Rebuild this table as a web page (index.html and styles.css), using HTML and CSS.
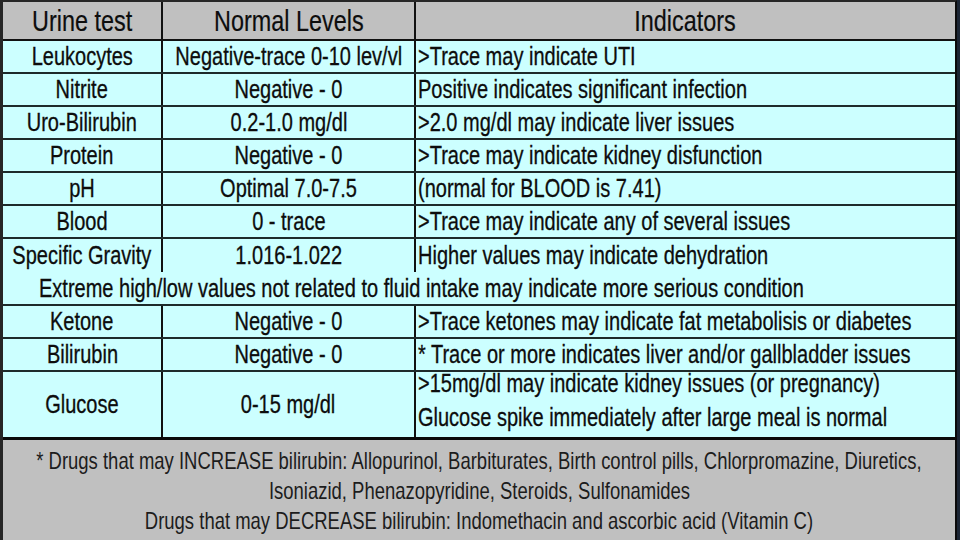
FILE: index.html
```html
<!DOCTYPE html>
<html>
<head>
<meta charset="utf-8">
<link rel="stylesheet" href="styles.css">
</head>
<body>
<div class="sheet">
  <div class="row head">
    <div class="c"><span class="t">Urine test</span></div>
    <div class="c"><span class="t">Normal Levels</span></div>
    <div class="c last"><span class="t">Indicators</span></div>
  </div>
  <div class="row">
    <div class="c"><span class="t">Leukocytes</span></div>
    <div class="c"><span class="t">Negative-trace 0-10 lev/vl</span></div>
    <div class="c ind"><span class="t">&gt;Trace may indicate UTI</span></div>
  </div>
  <div class="row">
    <div class="c"><span class="t">Nitrite</span></div>
    <div class="c"><span class="t">Negative - 0</span></div>
    <div class="c ind"><span class="t">Positive indicates significant infection</span></div>
  </div>
  <div class="row">
    <div class="c"><span class="t">Uro-Bilirubin</span></div>
    <div class="c"><span class="t">0.2-1.0 mg/dl</span></div>
    <div class="c ind"><span class="t">&gt;2.0 mg/dl may indicate liver issues</span></div>
  </div>
  <div class="row">
    <div class="c"><span class="t">Protein</span></div>
    <div class="c"><span class="t">Negative - 0</span></div>
    <div class="c ind"><span class="t">&gt;Trace may indicate kidney disfunction</span></div>
  </div>
  <div class="row">
    <div class="c"><span class="t">pH</span></div>
    <div class="c"><span class="t">Optimal 7.0-7.5</span></div>
    <div class="c ind"><span class="t">(normal for BLOOD is 7.41)</span></div>
  </div>
  <div class="row">
    <div class="c"><span class="t">Blood</span></div>
    <div class="c"><span class="t">0 - trace</span></div>
    <div class="c ind"><span class="t">&gt;Trace may indicate any of several issues</span></div>
  </div>
  <div class="row open">
    <div class="c"><span class="t">Specific Gravity</span></div>
    <div class="c"><span class="t">1.016-1.022</span></div>
    <div class="c ind"><span class="t">Higher values may indicate dehydration</span></div>
  </div>
  <div class="row span">
    <div class="wide"><span class="t">Extreme high/low values not related to fluid intake may indicate more serious condition</span></div>
  </div>
  <div class="row">
    <div class="c"><span class="t">Ketone</span></div>
    <div class="c"><span class="t">Negative - 0</span></div>
    <div class="c ind"><span class="t">&gt;Trace ketones may indicate fat metabolisis or diabetes</span></div>
  </div>
  <div class="row">
    <div class="c"><span class="t">Bilirubin</span></div>
    <div class="c"><span class="t">Negative - 0</span></div>
    <div class="c ind"><span class="t">* Trace or more indicates liver and/or gallbladder issues</span></div>
  </div>
  <div class="row tall">
    <div class="c"><span class="t">Glucose</span></div>
    <div class="c"><span class="t">0-15 mg/dl</span></div>
    <div class="c ind two">
      <span class="t">&gt;15mg/dl may indicate kidney issues (or pregnancy)</span>
      <span class="t">Glucose spike immediately after large meal is normal</span>
    </div>
  </div>
  <div class="foot">
    <p><span class="t">* Drugs that may INCREASE bilirubin: Allopurinol, Barbiturates, Birth control pills, Chlorpromazine, Diuretics,</span></p>
    <p><span class="t">Isoniazid, Phenazopyridine, Steroids, Sulfonamides</span></p>
    <p><span class="t">Drugs that may DECREASE bilirubin: Indomethacin and ascorbic acid (Vitamin C)</span></p>
  </div>
</div>
</body>
</html>
```
FILE: styles.css
```css
html, body {
  margin: 0;
  padding: 0;
}
body {
  width: 960px;
  height: 540px;
  background: #1b2534;
  overflow: hidden;
  font-family: "Liberation Sans", Arial, sans-serif;
  color: #0d0d0d;
}
.sheet {
  box-sizing: border-box;
  width: 957px;
  height: 540px;
  background: #ccffff;
  border-left: 3px solid #262626;
  border-top: 2px solid #262626;
  border-right: 2px solid #0a0a0a;
  display: flex;
  flex-direction: column;
}
.t {
  display: inline-block;
  white-space: nowrap;
  transform: scaleX(0.80);
  transform-origin: center center;
  -webkit-text-stroke: 0.3px #0d0d0d;
}
.row {
  box-sizing: border-box;
  display: grid;
  grid-template-columns: 160px 253px 1fr;
  height: 33px;
  border-bottom: 2px solid #1e2a2a;
  font-size: 25px;
  flex: none;
}
.row.head {
  height: 39px;
  background: #c0c0c0;
  font-size: 30px;
  border-bottom: 2px solid #111;
}
.row.head .t {
  transform: scaleX(0.78);
  -webkit-text-stroke: 0.2px #0d0d0d;
}
.row.open {
  border-bottom: none;
}
.row.span {
  display: flex;
  height: 34px;
}
.row.tall {
  height: 68px;
  border-bottom: 3px solid #0a0a0a;
}
.c {
  border-right: 2px solid #111;
  display: flex;
  align-items: center;
  justify-content: center;
  white-space: nowrap;
  min-width: 0;
}
.c.last, .c.ind {
  border-right: none;
}
.c.ind {
  justify-content: flex-start;
  padding-left: 2px;
}
.c.ind .t {
  transform-origin: left center;
}
.c.two {
  flex-direction: column;
  align-items: flex-start;
  justify-content: flex-start;
  line-height: 34px;
  margin-top: -6px;
}
.wide {
  padding-left: 36px;
  display: flex;
  align-items: center;
  white-space: nowrap;
}
.wide .t {
  transform-origin: left center;
}
.foot {
  flex: 1;
  background: #c0c0c0;
  color: #1c1c1c;
  font-size: 24px;
  padding-top: 6px;
}
.foot p {
  margin: 0;
  height: 30px;
  line-height: 30px;
  display: flex;
  justify-content: center;
  white-space: nowrap;
}
.foot .t {
  transform: scaleX(0.77);
  -webkit-text-stroke: 0;
}
```
